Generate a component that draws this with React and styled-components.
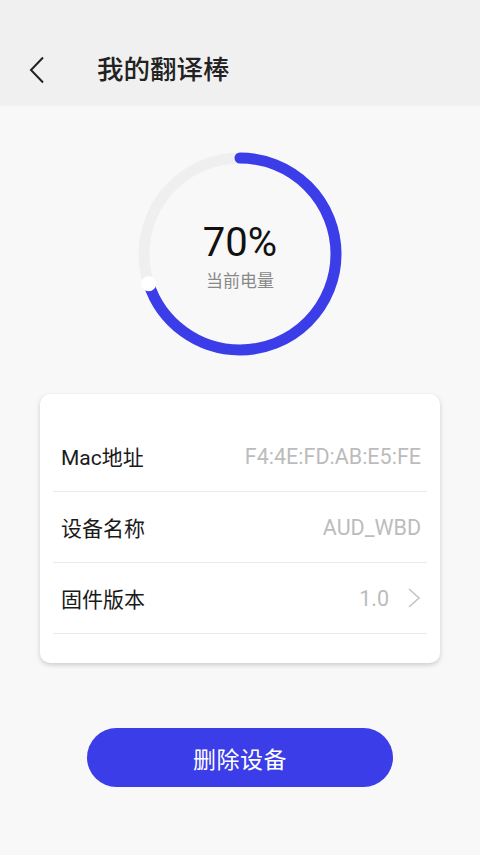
import React from "react";
import styled, { createGlobalStyle } from "styled-components";

const GlobalStyle = createGlobalStyle`
  html, body {
    margin: 0;
    padding: 0;
    background: #f8f8f8;
    font-family: Roboto, "Noto Sans CJK SC", sans-serif;
  }
  * { box-sizing: border-box; }
`;

const BLUE = "#3b3de8";

const rows = [
  { label: "Mac地址", value: "F4:4E:FD:AB:E5:FE" },
  { label: "设备名称", value: "AUD_WBD" },
  { label: "固件版本", value: "1.0", arrow: true },
];

const Battery = ({ percent }) => {
  const size = 212;
  const c = size / 2;
  const r = 96;
  const len = 2 * Math.PI * r;
  const angle = (percent / 100) * 2 * Math.PI;
  const dotX = c + r * Math.sin(angle);
  const dotY = c - r * Math.cos(angle);
  return (
    <Ring>
      <svg width={size} height={size} viewBox={`0 0 ${size} ${size}`}>
        <circle cx={c} cy={c} r={r} fill="none" stroke="#efefef" strokeWidth="11" />
        <circle
          cx={c}
          cy={c}
          r={r}
          fill="none"
          stroke={BLUE}
          strokeWidth="11"
          strokeLinecap="round"
          strokeDasharray={`${(len * percent) / 100} ${len}`}
          transform={`rotate(-90 ${c} ${c})`}
        />
        <circle cx={dotX} cy={dotY} r="7.5" fill="#ffffff" />
      </svg>
      <RingText>
        <Percent>{percent}%</Percent>
        <Caption>当前电量</Caption>
      </RingText>
    </Ring>
  );
};

const App = () => {
  return (
    <Page>
      <GlobalStyle />
      <Header>
        <BackButton>
          <svg width="16" height="28" viewBox="0 0 16 28">
            <polyline points="14,1.5 2,14 14,26.5" fill="none" stroke="#222" strokeWidth="2" />
          </svg>
        </BackButton>
        <Title>我的翻译棒</Title>
      </Header>

      <Battery percent={70} />

      <Card>
        {rows.map((item, ind) => (
          <Row key={ind}>
            <Label>{item.label}</Label>
            <Value>
              {item.value}
              {item.arrow && (
                <svg width="14" height="22" viewBox="0 0 14 22">
                  <polyline points="2,2 12,11 2,20" fill="none" stroke="#c4c4c4" strokeWidth="1.6" />
                </svg>
              )}
            </Value>
          </Row>
        ))}
      </Card>

      <DeleteButton>删除设备</DeleteButton>
    </Page>
  );
};

export default App;

const Page = styled.div`
  min-height: 855px;
  background: #f8f8f8;
  display: flex;
  flex-direction: column;
  align-items: center;
`;

const Header = styled.div`
  width: 100%;
  height: 106px;
  background: #f0f0f0;
  display: flex;
  align-items: flex-end;
  padding: 0 0 21px 29px;
`;

const BackButton = styled.div`
  width: 16px;
  height: 28px;
  display: flex;
  margin-bottom: 1px;
`;

const Title = styled.div`
  margin-left: 52px;
  font-size: 26.5px;
  line-height: 30px;
  font-weight: 500;
  color: #222;
`;

const Ring = styled.div`
  position: relative;
  width: 212px;
  height: 212px;
  margin-top: 42px;
  svg { display: block; }
`;

const RingText = styled.div`
  position: absolute;
  inset: 0;
  display: flex;
  flex-direction: column;
  align-items: center;
  padding-top: 72px;
`;

const Percent = styled.div`
  font-size: 40px;
  line-height: 46px;
  color: #111;
`;

const Caption = styled.div`
  font-size: 17px;
  line-height: 22px;
  color: #888;
  margin-top: 4px;
`;

const Card = styled.div`
  width: 400px;
  margin-top: 34px;
  background: #fff;
  border-radius: 10px;
  box-shadow: 0 2px 5px rgba(0, 0, 0, 0.18);
  padding: 27px 13px 29px;
`;

const Row = styled.div`
  height: 71px;
  display: flex;
  align-items: center;
  justify-content: space-between;
  padding: 0 6px 0 8px;
  border-bottom: 1px solid #ebebeb;
`;

const Label = styled.div`
  font-size: 21px;
  color: #1a1a1a;
`;

const Value = styled.div`
  display: flex;
  align-items: center;
  gap: 18px;
  font-size: 21.5px;
  color: #bcbcbc;
  svg { display: block; }
`;

const DeleteButton = styled.button`
  margin-top: 65px;
  width: 306px;
  height: 59px;
  border: none;
  border-radius: 30px;
  background: ${BLUE};
  color: #fff;
  font-family: "Noto Sans CJK SC", sans-serif;
  font-size: 23px;
  letter-spacing: 0.5px;
`;
